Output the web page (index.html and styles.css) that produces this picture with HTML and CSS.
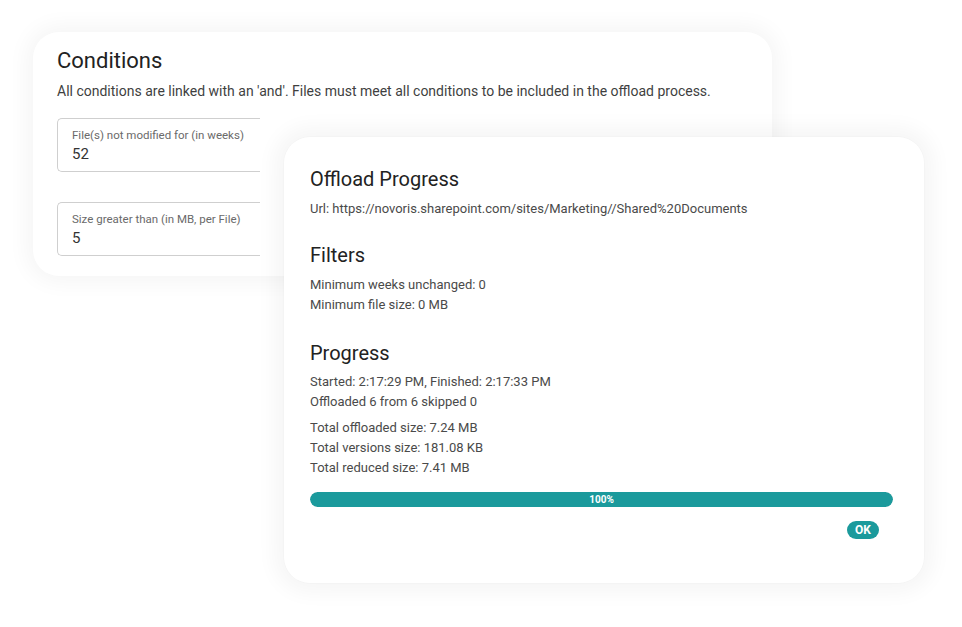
FILE: index.html
```html
<!DOCTYPE html>
<html>
<head>
<meta charset="utf-8">
<link rel="stylesheet" href="styles.css">
</head>
<body>
<div class="stage">
  <section class="card conditions">
    <h1 class="title">Conditions</h1>
    <p class="desc">All conditions are linked with an 'and'. Files must meet all conditions to be included in the offload process.</p>
    <div class="field">
      <div class="field-label">File(s) not modified for (in weeks)</div>
      <div class="field-value">52</div>
    </div>
    <div class="field">
      <div class="field-label">Size greater than (in MB, per File)</div>
      <div class="field-value">5</div>
    </div>
  </section>

  <section class="card progress-card">
    <h2 class="heading">Offload Progress</h2>
    <p class="line url">Url: https://novoris.sharepoint.com/sites/Marketing//Shared%20Documents</p>

    <h2 class="heading sec">Filters</h2>
    <div class="group">
      <p class="line">Minimum weeks unchanged: 0</p>
      <p class="line">Minimum file size: 0 MB</p>
    </div>

    <h2 class="heading sec sec2">Progress</h2>
    <div class="group g1">
      <p class="line">Started: 2:17:29 PM, Finished: 2:17:33 PM</p>
      <p class="line">Offloaded 6 from 6 skipped 0</p>
    </div>
    <div class="group g2">
      <p class="line">Total offloaded size: 7.24 MB</p>
      <p class="line">Total versions size: 181.08 KB</p>
      <p class="line">Total reduced size: 7.41 MB</p>
    </div>

    <div class="bar"><div class="bar-fill" style="width:100%">100%</div></div>
    <div class="actions"><button class="ok">OK</button></div>
  </section>
</div>
</body>
</html>
```

FILE: styles.css
```css
* { box-sizing: border-box; }
html, body {
  margin: 0;
  padding: 0;
  background: #ffffff;
}
body {
  font-family: Roboto, "Noto Sans", "Liberation Sans", sans-serif;
  width: 962px;
  height: 627px;
  overflow: hidden;
}
.stage {
  position: relative;
  width: 962px;
  height: 627px;
  padding: 32px 0 0 33px;
}
.card {
  background: #fff;
  border-radius: 26px;
  box-shadow: 0 0 22px 6px rgba(0, 0, 0, 0.045);
}
.conditions {
  width: 739px;
  height: 244px;
  padding: 14px 24px 0 24px;
}
.title {
  margin: 0;
  font-size: 22px;
  font-weight: 400;
  color: #222;
  line-height: 30px;
}
.desc {
  margin: 5px 0 17px 0;
  font-size: 14px;
  color: #3f3f3f;
  line-height: 20px;
}
.field {
  width: 203px;
  height: 54px;
  border: 1px solid #cfcfcf;
  border-right: none;
  border-radius: 5px 0 0 5px;
  padding: 8px 14px 0 14px;
  margin-bottom: 30px;
}
.field-label {
  font-size: 11.5px;
  color: #6a6a6a;
  line-height: 16px;
}
.field-value {
  font-size: 15px;
  color: #333;
  line-height: 20px;
  margin-top: 1px;
}
.progress-card {
  position: absolute;
  left: 284px;
  top: 137px;
  width: 640px;
  height: 446px;
  padding: 28px 32px 0 26px;
  box-shadow: 0 0 20px 10px rgba(0, 0, 0, 0.04), 0 0 0 1px rgba(0,0,0,0.01);
}
.heading {
  margin: 0;
  font-size: 20px;
  font-weight: 400;
  color: #222;
  line-height: 28px;
}
.heading.sec { margin-top: 22px; }
.heading.sec2 { margin-top: 24px; }
.line {
  margin: 0;
  font-size: 13px;
  color: #4a4a4a;
  line-height: 20px;
}
.url { margin-top: 6px; }
.group { margin-top: 6px; }
.group.g1 { margin-top: 5px; }
.group.g2 { margin-top: 6px; }
.bar {
  margin-top: 14px;
  width: 583px;
  height: 15px;
  border-radius: 8px;
  background: #e6e6e6;
  overflow: hidden;
}
.bar-fill {
  height: 100%;
  background: #1b9a9c;
  border-radius: 8px;
  color: #fff;
  font-size: 10px;
  font-weight: 700;
  text-align: center;
  line-height: 15px;
}
.actions {
  width: 583px;
  display: flex;
  justify-content: flex-end;
  padding-right: 14px;
  margin-top: 14px;
}
.ok {
  border: none;
  background: #1b9a9c;
  color: #fff;
  font-family: Roboto, "Noto Sans", sans-serif;
  font-weight: 700;
  font-size: 12px;
  width: 32px;
  height: 18px;
  padding: 0;
  border-radius: 9px;
  line-height: 18px;
}
```
